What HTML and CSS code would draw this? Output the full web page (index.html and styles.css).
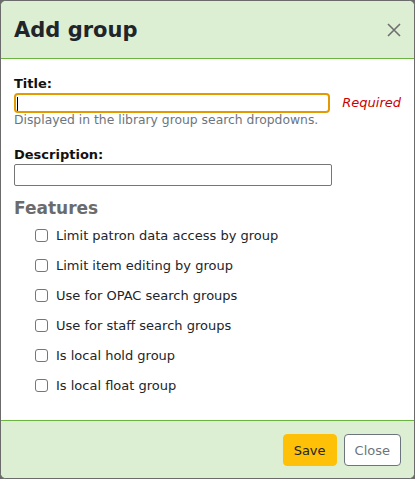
FILE: index.html
```html
<!DOCTYPE html>
<html>
<head>
<meta charset="utf-8">
<link rel="stylesheet" href="styles.css">
</head>
<body>
<div class="modal">
  <div class="modal-header">
    <h1 class="modal-title">Add group</h1>
    <button class="close" aria-label="Close">
      <svg width="14" height="14" viewBox="0 0 14 14"><path d="M1 1 L13 13 M13 1 L1 13" stroke="#6f6f6f" stroke-width="1.6" fill="none"/></svg>
    </button>
  </div>
  <div class="modal-body">
    <label class="lbl">Title:</label>
    <div class="field-row">
      <input class="txt focused" type="text">
      <span class="required">Required</span>
    </div>
    <div class="hint">Displayed in the library group search dropdowns.</div>
    <label class="lbl lbl-desc">Description:</label>
    <div class="field-row">
      <input class="txt" type="text">
    </div>
    <h2 class="features">Features</h2>
    <ul class="checks">
      <li><span class="cb"></span>Limit patron data access by group</li>
      <li><span class="cb"></span>Limit item editing by group</li>
      <li><span class="cb"></span>Use for OPAC search groups</li>
      <li><span class="cb"></span>Use for staff search groups</li>
      <li><span class="cb"></span>Is local hold group</li>
      <li><span class="cb"></span>Is local float group</li>
    </ul>
  </div>
  <div class="modal-footer">
    <button class="btn btn-save">Save</button>
    <button class="btn btn-close">Close</button>
  </div>
</div>
</body>
</html>
```
FILE: styles.css
```css
html, body {
  margin: 0;
  padding: 0;
  background: #6b6b6b;
  font-family: "DejaVu Sans", sans-serif;
}
.modal {
  box-sizing: border-box;
  width: 415px;
  height: 479px;
  border: 1px solid #6b6b6b;
  border-radius: 6px;
  background: #fff;
  overflow: hidden;
  display: flex;
  flex-direction: column;
}
.modal-header {
  height: 57px;
  background: #dcefd3;
  border-bottom: 1px solid #6db33f;
  display: flex;
  align-items: center;
  justify-content: space-between;
  padding: 0 13px;
  flex: none;
}
.modal-title {
  margin: 0;
  font-size: 21px;
  font-weight: bold;
  color: #212529;
  line-height: 26px;
  padding-top: 1px;
}
.close {
  border: 0;
  background: none;
  padding: 0;
  width: 14px;
  height: 14px;
  display: flex;
  margin-top: 1px;
}
.modal-body {
  flex: 1;
  padding: 17px 13px 0 13px;
}
.lbl {
  display: block;
  font-size: 13px;
  font-weight: bold;
  line-height: 16px;
  color: #111;
}
.lbl-desc {
  margin-top: 19px;
}
.field-row {
  display: flex;
  align-items: center;
  margin-top: 1px;
  gap: 12px;
}
.txt {
  box-sizing: border-box;
  width: 318px;
  height: 22px;
  border: 1px solid #767676;
  border-radius: 2px;
  margin: 0;
  padding: 0 3px;
  font: 13px "DejaVu Sans", sans-serif;
  background: #fff;
}
.txt.focused {
  height: 20px;
  border: 2px solid #e39a00;
  border-radius: 4px;
  background: linear-gradient(#000, #000) no-repeat 1px 2px / 1px 14px, #fff;
}
.required {
  color: #cc0000;
  font-style: italic;
  font-size: 13px;
  line-height: 16px;
}
.hint {
  font-size: 12.35px;
  line-height: 15px;
  color: #6c757d;
}
.features {
  margin: 11px 0 0 0;
  font-size: 17px;
  line-height: 23px;
  font-weight: bold;
  color: #6b6b6b;
}
.checks {
  list-style: none;
  margin: 0;
  padding: 0 0 0 20px;
}
.checks li {
  height: 30px;
  display: flex;
  align-items: center;
  font-size: 13px;
  color: #212529;
}
.cb {
  box-sizing: border-box;
  width: 13px;
  height: 13px;
  border: 1px solid #767676;
  border-radius: 3px;
  background: #fff;
  margin-left: 1px;
  margin-right: 8px;
  flex: none;
}
.modal-footer {
  flex: none;
  height: 58px;
  background: #dcefd3;
  border-top: 1px solid #6db33f;
  display: flex;
  justify-content: flex-end;
  align-items: flex-start;
  gap: 7px;
  padding: 13px 13px 0 0;
  box-sizing: border-box;
}
.btn {
  height: 32px;
  font: 13px "DejaVu Sans", sans-serif;
  border-radius: 4px;
  padding: 0 10px;
  cursor: pointer;
}
.btn-save {
  background: #ffc107;
  border: 1px solid #ffc107;
  color: #212529;
}
.btn-close {
  background: #fff;
  border: 1px solid #6c757d;
  color: #6c757d;
}
```
